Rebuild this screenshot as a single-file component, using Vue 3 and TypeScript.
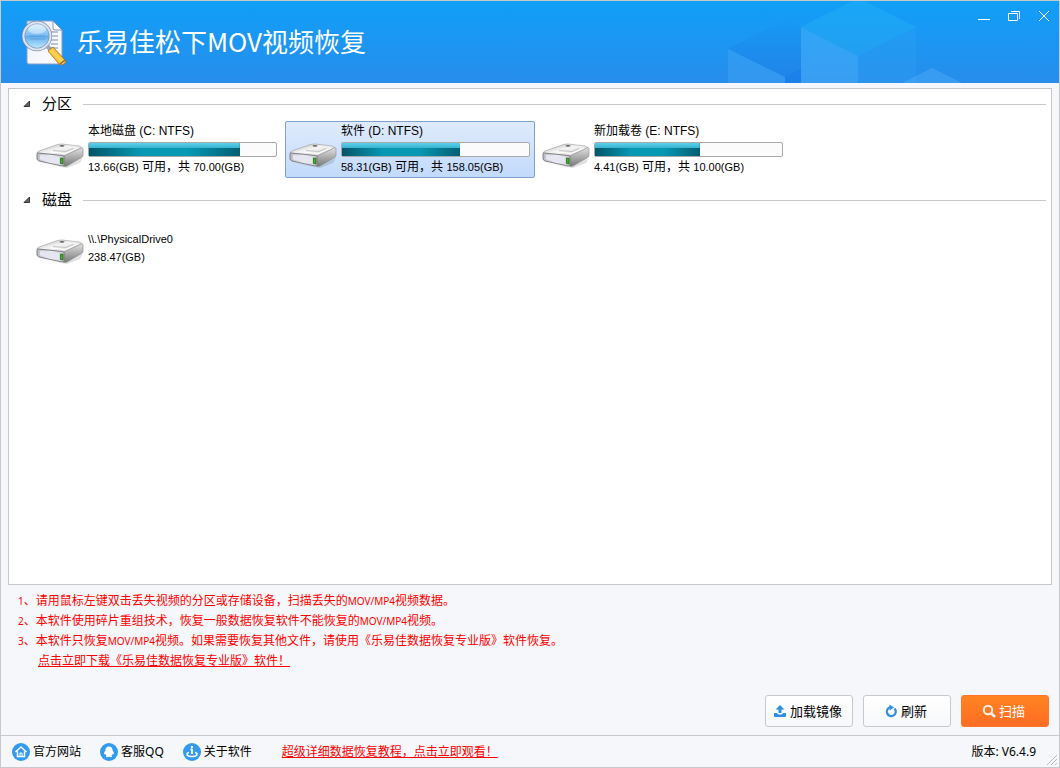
<script setup lang="ts">
import { ref } from 'vue'

interface Volume {
  id: string
  name: string
  free: number
  total: number
}

const volumes: Volume[] = [
  { id: 'c', name: '本地磁盘 (C: NTFS)', free: 13.66, total: 70 },
  { id: 'd', name: '软件 (D: NTFS)', free: 58.31, total: 158.05 },
  { id: 'e', name: '新加载卷 (E: NTFS)', free: 4.41, total: 10 },
]

const disks = [{ id: 'p0', name: '\\\\.\\PhysicalDrive0', size: 238.47 }]

const selected = ref('d')
const volumesOpen = ref(true)
const disksOpen = ref(true)

const usedPercent = (v: Volume): number => Math.round((1 - v.free / v.total) * 1000) / 10
</script>

<template>
  <div class="window">
    <svg class="defs" width="0" height="0" aria-hidden="true">
      <defs>
        <linearGradient id="drive-top" x1="0" y1="0" x2="1" y2="1">
          <stop offset="0" stop-color="#b4b4b4" />
          <stop offset="0.45" stop-color="#f4f4f4" />
          <stop offset="1" stop-color="#cfcfcf" />
        </linearGradient>
        <linearGradient id="drive-front" x1="0" y1="0" x2="1" y2="0">
          <stop offset="0" stop-color="#b9bac0" />
          <stop offset="0.5" stop-color="#eeeff6" />
          <stop offset="1" stop-color="#c9cad2" />
        </linearGradient>
        <linearGradient id="drive-side" x1="0" y1="0" x2="0" y2="1">
          <stop offset="0" stop-color="#e2e2e2" />
          <stop offset="1" stop-color="#787878" />
        </linearGradient>
        <symbol id="drive" viewBox="0 0 48 26">
          <path d="M3 21L29 25L47 16L44 21L31 26Z" fill="#000" opacity="0.12" />
          <path d="M1 11Q1 10 3 9L20 3Q23 2 26 2L43 4Q46 5 46 6L30 14L27 14Z" fill="url(#drive-top)" stroke="#9a9a9a" stroke-width="0.6" />
          <path d="M28 14L46 5.500Q47 6 47 7V13Q47 15 45 16L31 24Q28 25 27 24Z" fill="url(#drive-side)" stroke="#8a8a8a" stroke-width="0.6" />
          <path d="M2 11L26 13.500Q28 13.500 28 15V23Q28 24 26 24L3 19Q1 18 1 17V12Q1 11 2 11Z" fill="url(#drive-front)" stroke="#77777c" stroke-width="0.9" />
          <path d="M4 13L23 15V21.500L4 17.500Z" fill="#e5e6f2" />
          <path d="M15 10L29 11.500L42 6" fill="none" stroke="#fff" stroke-width="1" />
          <path d="M17 8.500L30 9.500L37 6.500" fill="none" stroke="#b9b9b9" stroke-width="0.8" />
          <ellipse cx="26" cy="3.800" rx="2.500" ry="0.900" fill="#666" />
          <path d="M24.500 16L27 16.300V22L24.500 21.500Z" fill="#32bd16" stroke="#245817" stroke-width="0.7" />
        </symbol>
      </defs>
    </svg>

    <header class="titlebar">
      <svg class="cubes" width="360" height="82" viewBox="0 1 360 82" aria-hidden="true">
        <defs>
          <linearGradient id="cube-top" x1="0" y1="0" x2="0" y2="1">
            <stop offset="0" stop-color="#1676e5" stop-opacity="0.05" />
            <stop offset="1" stop-color="#1676e5" stop-opacity="0.38" />
          </linearGradient>
        </defs>
        <path d="M29 49L86 20L102 28V69L86 77Z" fill="url(#cube-top)" />
        <path d="M29 49L86 77V83H29Z" fill="#5eb5fb" opacity="0.25" />
        <path d="M86 77L102 69V83H86Z" fill="#1472e8" opacity="0.5" />
        <path d="M102 27L154 1H165L217 27L159 56Z" fill="#30bff5" opacity="0.28" />
        <path d="M102 27L159 56V83H102Z" fill="#65c1ff" opacity="0.32" />
        <path d="M159 56L217 27V83H159Z" fill="#36a6f5" opacity="0.26" />
        <path d="M203 83L233 68L263 83Z" fill="#62bcff" opacity="0.3" />
      </svg>
      <svg class="logo" width="46" height="47" viewBox="0 0 46 47" aria-hidden="true">
        <defs>
          <linearGradient id="page" x1="0" y1="0" x2="1" y2="1">
            <stop offset="0" stop-color="#e9edf8" />
            <stop offset="1" stop-color="#fff" />
          </linearGradient>
          <linearGradient id="lens" x1="0" y1="0" x2="0" y2="1">
            <stop offset="0" stop-color="#d2edfd" />
            <stop offset="0.48" stop-color="#7cbdf3" />
            <stop offset="0.5" stop-color="#5fabec" />
            <stop offset="1" stop-color="#c5f0ff" />
          </linearGradient>
          <linearGradient id="handle" x1="0" y1="1" x2="1" y2="0">
            <stop offset="0" stop-color="#d57b07" />
            <stop offset="0.5" stop-color="#ffd650" />
            <stop offset="1" stop-color="#d17607" />
          </linearGradient>
        </defs>
        <path d="M6 2H32L41 11V43Q41 45 39 45H8Q6 45 6 43Z" fill="url(#page)" stroke="#8d9ec6" stroke-width="1" />
        <path d="M32 2V9Q32 11 34 11H41Z" fill="#f9fbff" stroke="#8597bd" stroke-width="1" />
        <path d="M27 13H37M30 17H37M30 21H37M30 25H37M26 29H37" stroke="#7d8fb1" stroke-width="1.200" />
        <circle cx="16" cy="17" r="13.500" fill="url(#lens)" stroke="#7d91b4" stroke-width="3.400" />
        <circle cx="16" cy="17" r="13.500" fill="none" stroke="#dce5f1" stroke-width="2" />
        <ellipse cx="16" cy="10" rx="9" ry="5" fill="#fff" opacity="0.4" />
        <path d="M8 17H24M9 20H24" stroke="#377fcf" stroke-width="0.800" opacity="0.5" />
        <path d="M26 27L30 31" stroke="#9aa7bc" stroke-width="4" />
        <path d="M27 32L32 28L44 41Q46 43 43 45Q40 47 38 45Z" fill="url(#handle)" stroke="#ad6814" stroke-width="0.800" />
        <path d="M39 45L44 41" stroke="#8d6546" stroke-width="1.500" />
      </svg>
      <h1>乐易佳松下MOV视频恢复</h1>
      <div class="controls">
        <button type="button" aria-label="最小化">
          <svg width="14" height="14" viewBox="0 0 14 14"><path d="M1 10.500H13" /></svg>
        </button>
        <button type="button" aria-label="还原">
          <svg width="14" height="14" viewBox="0 0 14 14"><path d="M1.500 4.500H10.500V11.500H1.500ZM4 2.500H12.500V10" /></svg>
        </button>
        <button type="button" aria-label="关闭">
          <svg width="14" height="14" viewBox="0 0 14 14"><path d="M2 2L12 12M12 2L2 12" /></svg>
        </button>
      </div>
    </header>

    <main class="panel">
      <section>
        <h2>
          <button type="button" class="group" :aria-expanded="volumesOpen" @click="volumesOpen = !volumesOpen">
            <svg width="8" height="8" viewBox="0 0 8 8" aria-hidden="true"><path d="M1 6.500L6.500 1V6.500Z" /></svg>
            <span>分区</span>
          </button>
        </h2>
        <div v-show="volumesOpen" class="items">
          <button
            v-for="v in volumes"
            :key="v.id"
            type="button"
            class="item"
            :class="{ selected: selected === v.id }"
            @click="selected = v.id"
          >
            <svg class="drive" width="48" height="26" aria-hidden="true"><use href="#drive" /></svg>
            <span class="info">
              <span class="name">{{ v.name }}</span>
              <span class="bar"><span class="fill" :style="{ width: usedPercent(v) + '%' }"></span></span>
              <span class="size"><small>{{ v.free.toFixed(2) }}(GB)</small> 可用，共 <small>{{ v.total.toFixed(2) }}(GB)</small></span>
            </span>
          </button>
        </div>
      </section>
      <section>
        <h2>
          <button type="button" class="group" :aria-expanded="disksOpen" @click="disksOpen = !disksOpen">
            <svg width="8" height="8" viewBox="0 0 8 8" aria-hidden="true"><path d="M1 6.500L6.500 1V6.500Z" /></svg>
            <span>磁盘</span>
          </button>
        </h2>
        <div v-show="disksOpen" class="items">
          <button
            v-for="d in disks"
            :key="d.id"
            type="button"
            class="item disk"
            :class="{ selected: selected === d.id }"
            @click="selected = d.id"
          >
            <svg class="drive" width="48" height="26" aria-hidden="true"><use href="#drive" /></svg>
            <span class="info">
              <small>{{ d.name }}</small>
              <small>{{ d.size.toFixed(2) }}(GB)</small>
            </span>
          </button>
        </div>
      </section>
    </main>

    <div class="notes">
      <p><small>1</small>、请用鼠标左键双击丢失视频的分区或存储设备，扫描丢失的<small>MOV/MP4</small>视频数据。</p>
      <p><small>2</small>、本软件使用碎片重组技术，恢复一般数据恢复软件不能恢复的<small>MOV/MP4</small>视频。</p>
      <p><small>3</small>、本软件只恢复<small>MOV/MP4</small>视频。如果需要恢复其他文件，请使用《乐易佳数据恢复专业版》软件恢复。</p>
      <p class="download"><a href="#download">点击立即下载《乐易佳数据恢复专业版》软件！</a></p>
    </div>

    <div class="actions">
      <button type="button">
        <svg width="14" height="14" viewBox="0 0 14 14" aria-hidden="true">
          <path d="M7 1L11.500 5.500H8.500V9H5.500V5.500H2.500Z" fill="#2f8fe0" />
          <path d="M1 9H4Q4.500 10.500 6 10.500H8Q9.500 10.500 10 9H13V12Q13 13 12 13H2Q1 13 1 12Z" fill="#2f8fe0" />
        </svg>
        加载镜像
      </button>
      <button type="button">
        <svg width="14" height="14" viewBox="0 0 14 14" aria-hidden="true">
          <path d="M10.500 4.500A4.500 4.500 0 1 1 6.500 3.200" fill="none" stroke="#2f8fe0" stroke-width="2.200" />
          <path d="M5.500 0.500L10 3.500L5.500 6.500Z" fill="#2f8fe0" />
        </svg>
        刷新
      </button>
      <button type="button" class="primary">
        <svg width="14" height="14" viewBox="0 0 14 14" aria-hidden="true">
          <circle cx="6" cy="6" r="4.200" fill="none" stroke="#fff2e8" stroke-width="2" />
          <path d="M9 9L13 13" stroke="#fff2e8" stroke-width="2.600" />
        </svg>
        扫描
      </button>
    </div>

    <footer class="statusbar">
      <nav>
        <a href="#home">
          <svg width="18" height="18" viewBox="0 0 18 18" aria-hidden="true">
            <circle cx="9" cy="9" r="9" fill="#329af0" />
            <path d="M3.500 9L9 4L14.500 9M5.500 8.500V13.500H12.500V8.500" fill="none" stroke="#fff" stroke-width="1.500" />
            <path d="M8 13V10H10V13" fill="none" stroke="#fff" stroke-width="1" />
          </svg>
          官方网站
        </a>
        <a href="#service">
          <svg width="18" height="18" viewBox="0 0 18 18" aria-hidden="true">
            <circle cx="9" cy="9" r="9" fill="#329af0" />
            <path d="M9 3.500C6.500 3.500 5.300 5.300 5.400 7.500C4.400 8.800 3.800 10.300 4.200 11.300C4.600 11.500 5 11 5.400 10.700C5.600 11.600 6 12.200 6.400 12.700C5.500 13.300 5.800 14.200 7 14.200C8 14.200 8.500 14 9 13.700C9.500 14 10 14.200 11 14.200C12.200 14.200 12.500 13.300 11.600 12.700C12 12.200 12.400 11.600 12.600 10.700C13 11 13.400 11.500 13.800 11.300C14.200 10.300 13.600 8.800 12.600 7.500C12.700 5.300 11.500 3.500 9 3.500Z" fill="#fff" />
          </svg>
          客服QQ
        </a>
        <a href="#about">
          <svg width="18" height="18" viewBox="0 0 18 18" aria-hidden="true">
            <circle cx="9" cy="9" r="9" fill="#329af0" />
            <circle cx="9" cy="4" r="1.200" fill="#fff" />
            <path d="M9 6V11M7.500 6.500H9" stroke="#fff" stroke-width="1.800" fill="none" />
            <path d="M6 9.500C2.500 10.500 3.500 13.500 9 13.500S15.500 10.500 12 9.500" fill="none" stroke="#fff" stroke-width="1.500" />
          </svg>
          关于软件
        </a>
      </nav>
      <a class="tutorial" href="#tutorial">超级详细数据恢复教程，点击立即观看！</a>
      <span class="version">版本: V6.4.9</span>
      <svg class="grip" width="11" height="11" viewBox="0 0 11 11" aria-hidden="true">
        <path d="M1 11L11 1M5 11L11 5M9 11L11 9" stroke="#b9bac0" stroke-width="1" />
      </svg>
    </footer>
  </div>
</template>

<style>
body {
  margin: 0;
}
</style>

<style scoped>
.window {
  position: relative;
  box-sizing: border-box;
  display: flex;
  flex-direction: column;
  min-height: 100vh;
  border: 1px solid #c8c9cd;
  background: #f5f7fa;
  color: #000;
  font: 12px/18px "Noto Sans", "Noto Sans CJK SC", sans-serif;
}

.defs {
  position: absolute;
}

button {
  box-sizing: border-box;
  margin: 0;
  padding: 0;
  border: 0;
  background: none;
  color: inherit;
  font: inherit;
}

.titlebar {
  position: relative;
  display: flex;
  align-items: center;
  height: 82px;
  background: linear-gradient(#109ff9, #278deb);
  color: #fff;
}

.cubes {
  position: absolute;
  top: 0;
  right: 0;
}

.logo {
  margin-left: 20px;
  flex: none;
}

h1 {
  flex: 1;
  margin: 0 0 0 10px;
  padding-bottom: 2px;
  font: 400 26px/40px "Noto Sans CJK SC", sans-serif;
}

.controls {
  position: relative;
  display: flex;
  align-self: flex-start;
}

.controls button {
  display: flex;
  align-items: center;
  justify-content: center;
  width: 30px;
  height: 30px;
}

.controls path {
  fill: none;
  stroke: #fff;
  stroke-width: 1;
}

.panel {
  flex: 1;
  margin: 5px 7px 0;
  padding: 4px 5px 0 14px;
  border: 1px solid #c6c7cd;
  background: #fff;
}

section {
  padding-bottom: 11px;
}

h2 {
  display: flex;
  align-items: center;
  gap: 11px;
  height: 22px;
  margin: 0 0 6px;
  font: 15px/22px "Noto Sans CJK SC", sans-serif;
}

h2::after {
  content: "";
  flex: 1;
  height: 1px;
  background: #c9c9c9;
}

.group {
  display: flex;
  align-items: center;
  gap: 11px;
}

.group span {
  padding-bottom: 2px;
}

.group path {
  fill: #666;
  stroke: #333;
  stroke-width: 1;
}

.items {
  display: flex;
  flex-wrap: wrap;
  gap: 3px;
  padding-left: 9px;
}

.item {
  display: flex;
  align-items: flex-start;
  gap: 4px;
  width: 250px;
  height: 57px;
  padding: 0 4px 0 3px;
  border: 1px solid transparent;
  border-radius: 2px;
  text-align: left;
  font: 12px/18px "Liberation Sans", "Noto Sans CJK SC", sans-serif;
}

.item.selected {
  border-color: #7da2ce;
  background: linear-gradient(#dfebfc, #c2dafc);
}

.drive {
  flex: none;
  margin-top: 20px;
}

.info {
  display: flex;
  flex: 1;
  flex-direction: column;
}

small {
  font-size: 11px;
}

.bar {
  box-sizing: border-box;
  height: 15px;
  margin: 2px 0 1px;
  border: 1px solid #a9a9a9;
  border-radius: 2px;
  background: #fbfbfb;
}

.fill {
  display: block;
  height: 100%;
  background:
    linear-gradient(#5cd0ea, #38b3d1) top / 100% 5px no-repeat,
    linear-gradient(90deg, #045467, #0799b4 35%, #0799b4 65%, #045e73);
}

.disk .info {
  padding-top: 12px;
}

.notes {
  padding: 5px 17px 0;
  color: #f00;
  font: 12px/20px "Noto Sans CJK SC", sans-serif;
}

.notes p {
  margin: 0;
  height: 20px;
}

.notes small {
  font: 10px/20px "Noto Sans", sans-serif;
}

.notes .download {
  padding-left: 20px;
}

.notes a,
.tutorial {
  color: #f00;
  text-decoration: underline;
}

.actions {
  display: flex;
  justify-content: flex-end;
  gap: 10px;
  padding: 25px 10px 8px;
}

.actions button {
  display: flex;
  align-items: center;
  justify-content: center;
  gap: 3px;
  width: 88px;
  height: 32px;
  padding-right: 3px;
  border: 1px solid #c6c9ce;
  border-radius: 3px;
  background: linear-gradient(#fff, #f7f8fa);
  font-size: 13px;
}

.actions .primary {
  border-color: #ff7426;
  background: linear-gradient(#ff8420, #ff6c24);
  color: #fff;
}

.statusbar {
  position: relative;
  display: flex;
  align-items: center;
  height: 31px;
  border-top: 1px solid #c8c9cd;
}

nav {
  display: flex;
  gap: 19px;
  padding-left: 11px;
}

nav a {
  display: flex;
  align-items: center;
  gap: 3px;
  color: #000;
  text-decoration: none;
}

.tutorial {
  margin-left: 30px;
}

.version {
  margin-left: auto;
  padding-right: 23px;
}

.grip {
  position: absolute;
  right: 2px;
  bottom: 2px;
}
</style>
